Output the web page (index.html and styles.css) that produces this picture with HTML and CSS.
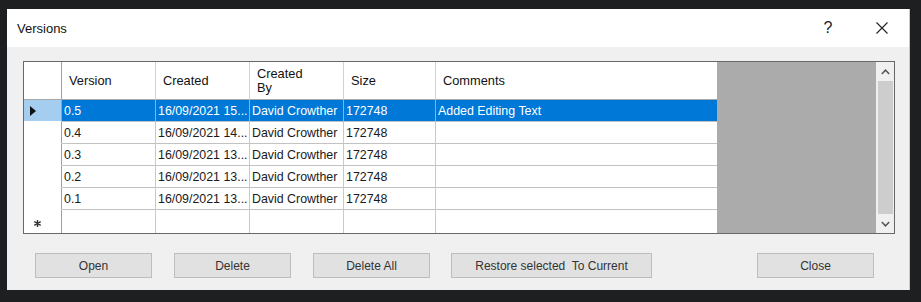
FILE: index.html
```html
<!DOCTYPE html>
<html lang="en">
  <head>
    <meta charset="UTF-8" />
    <meta name="viewport" content="width=device-width, initial-scale=1.0" />
    <title>Versions</title>
    <link rel="stylesheet" href="styles.css">
  </head>
  <body>
    <div class="dialog">
      <div class="titlebar">
        <span class="title">Versions</span>
        <div class="caption-buttons">
          <span class="cap-btn help">?</span>
          <span class="cap-btn close">
            <svg width="12" height="12" viewBox="0 0 12 12">
              <path d="M0.5 0.5 L11.5 11.5 M11.5 0.5 L0.5 11.5" stroke="#222" stroke-width="1.1" fill="none" />
            </svg>
          </span>
        </div>
      </div>

      <div class="content">
        <div class="grid">
          <table class="versions">
            <colgroup>
              <col class="c-rh" />
              <col class="c-ver" />
              <col class="c-created" />
              <col class="c-by" />
              <col class="c-size" />
              <col class="c-comments" />
            </colgroup>
            <thead>
              <tr>
                <th class="rh"></th>
                <th>Version</th>
                <th>Created</th>
                <th>Created<br />By</th>
                <th>Size</th>
                <th>Comments</th>
              </tr>
            </thead>
            <tbody>
              <tr class="selected">
                <td class="rh"><span class="arrow"></span></td>
                <td>0.5</td>
                <td>16/09/2021 15...</td>
                <td>David Crowther</td>
                <td>172748</td>
                <td>Added Editing Text</td>
              </tr>
              <tr>
                <td class="rh"></td>
                <td>0.4</td>
                <td>16/09/2021 14...</td>
                <td>David Crowther</td>
                <td>172748</td>
                <td></td>
              </tr>
              <tr>
                <td class="rh"></td>
                <td>0.3</td>
                <td>16/09/2021 13...</td>
                <td>David Crowther</td>
                <td>172748</td>
                <td></td>
              </tr>
              <tr>
                <td class="rh"></td>
                <td>0.2</td>
                <td>16/09/2021 13...</td>
                <td>David Crowther</td>
                <td>172748</td>
                <td></td>
              </tr>
              <tr>
                <td class="rh"></td>
                <td>0.1</td>
                <td>16/09/2021 13...</td>
                <td>David Crowther</td>
                <td>172748</td>
                <td></td>
              </tr>
              <tr class="new-row">
                <td class="rh">
                  <svg class="star" width="7" height="7" viewBox="0 0 7 7">
                    <path d="M3.5 0 V7 M0.3 1.6 L6.7 5.4 M6.7 1.6 L0.3 5.4" stroke="#333" stroke-width="1.4" fill="none" />
                  </svg>
                </td>
                <td></td>
                <td></td>
                <td></td>
                <td></td>
                <td></td>
              </tr>
            </tbody>
          </table>
          <div class="filler"></div>
          <div class="scrollbar">
            <div class="sb-arrow">
              <svg width="9" height="6" viewBox="0 0 9 6"><path d="M0.8 5 L4.5 1.2 L8.2 5" stroke="#555" stroke-width="1.5" fill="none" /></svg>
            </div>
            <div class="sb-thumb"></div>
            <div class="sb-arrow">
              <svg width="9" height="6" viewBox="0 0 9 6"><path d="M0.8 1 L4.5 4.8 L8.2 1" stroke="#555" stroke-width="1.5" fill="none" /></svg>
            </div>
          </div>
        </div>

        <div class="actions">
          <button class="btn">Open</button>
          <button class="btn">Delete</button>
          <button class="btn">Delete All</button>
          <button class="btn wide">Restore selected&nbsp; To Current</button>
          <button class="btn push">Close</button>
        </div>
      </div>
    </div>
  </body>
</html>
```

FILE: styles.css
```css
* {
  margin: 0;
  padding: 0;
  box-sizing: border-box;
}

body {
  font-family: "Liberation Sans", Arial, sans-serif;
  background-color: #1e1f21;
  width: 921px;
  height: 302px;
  padding: 9px 0 0 7px;
  overflow: hidden;
}

/* Dialog window */
.dialog {
  width: 903px;
  height: 281px;
  background-color: #f0f0f0;
  border-right: 1px solid #c9c9c9;
  display: flex;
  flex-direction: column;
}

.titlebar {
  height: 38px;
  background-color: #fff;
  display: flex;
  align-items: center;
  padding-left: 10px;
}

.title {
  font-size: 13px;
  color: #111;
  margin-top: 1px;
}

.caption-buttons {
  margin-left: auto;
  display: flex;
  gap: 8px;
  padding-right: 4px;
}

.cap-btn {
  width: 46px;
  height: 30px;
  display: flex;
  align-items: center;
  justify-content: center;
  color: #222;
}

.help {
  font-size: 16px;
}

.content {
  padding: 14px 14px 0 16px;
}

/* Data grid */
.grid {
  display: flex;
  height: 173px;
  border: 1px solid #686868;
  background-color: #fff;
}

.versions {
  width: 693px;
  table-layout: fixed;
  border-collapse: separate;
  border-spacing: 0;
  font-size: 12.4px;
  color: #1a1a1a;
}

.c-rh { width: 38px; }
.c-ver { width: 94px; }
.c-created { width: 94px; }
.c-by { width: 94px; }
.c-size { width: 92px; }
.c-comments { width: 281px; }

.versions th {
  height: 38px;
  font-weight: normal;
  font-size: 12.8px;
  line-height: 14px;
  text-align: left;
  padding-left: 7px;
  color: #111;
  border-right: 1px solid #d2d2d2;
  border-bottom: 1px solid #a8a8a8;
}

.versions td {
  height: 22px;
  padding-left: 2px;
  white-space: nowrap;
  overflow: hidden;
  border-right: 1px solid #c8c8c8;
  border-bottom: 1px solid #c2c2c2;
}

.versions th:last-child,
.versions td:last-child {
  border-right: none;
}

.versions .rh {
  padding-left: 6px;
  border-right: 1px solid #a0a0a0;
  border-bottom-color: #fff;
}

.versions thead .rh {
  border-bottom-color: #a8a8a8;
}

.versions tr.new-row td {
  height: 23px;
  border-bottom: none;
}

.versions tr.selected td {
  background-color: #0078d7;
  color: #fff;
  border-right-color: #7fb6e6;
}

.versions tr.selected td.rh {
  background-color: #a4cdef;
  border-right-color: #a0a0a0;
}

.arrow {
  display: block;
  width: 0;
  height: 0;
  border-left: 6px solid #111;
  border-top: 5px solid transparent;
  border-bottom: 5px solid transparent;
}

.star {
  display: block;
  margin-left: 4px;
  margin-top: 3px;
}

.filler {
  flex: 1;
  background-color: #ababab;
}

.scrollbar {
  width: 18px;
  background-color: #f0f0f0;
  display: flex;
  flex-direction: column;
}

.sb-arrow {
  height: 19px;
  display: flex;
  align-items: center;
  justify-content: center;
}

.sb-thumb {
  flex: 1;
  margin: 0 1px 0 2px;
  background-color: #cdcdcd;
}

/* Buttons */
.actions {
  display: flex;
  gap: 22px;
  margin-top: 19px;
  padding: 0 21px 0 12px;
}

.btn {
  width: 117px;
  height: 25px;
  font-family: "Liberation Sans", Arial, sans-serif;
  font-size: 12px;
  color: #333;
  background-color: #e1e1e1;
  border: 1px solid #bdbdbd;
}

.btn.wide {
  width: 201px;
  margin-left: -1px;
}

.btn.push {
  margin-left: auto;
}
```
